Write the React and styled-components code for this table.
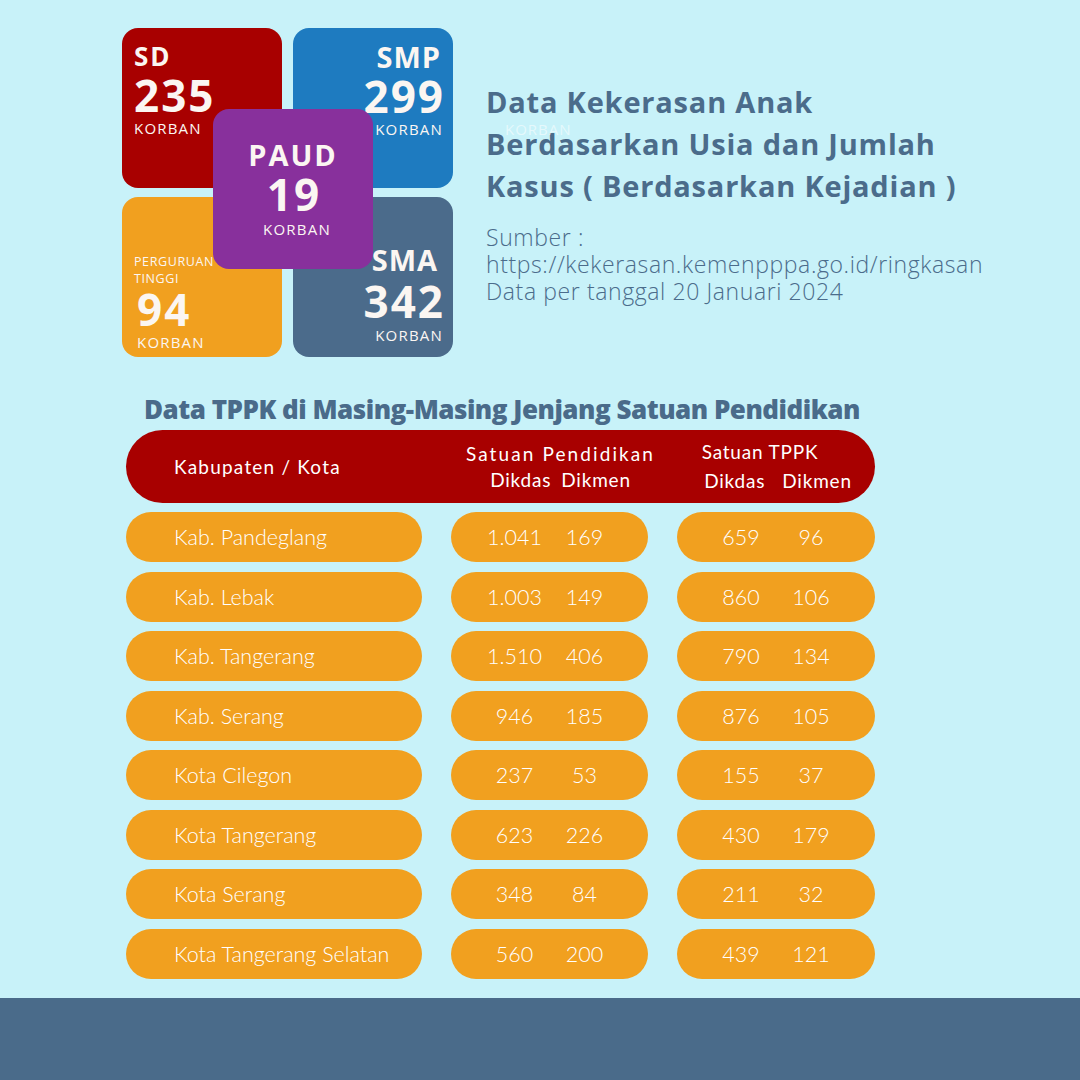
import React from "react";
import styled, { createGlobalStyle } from "styled-components";

const GlobalStyle = createGlobalStyle`
  html, body {
    margin: 0;
    padding: 0;
    background: #c8f2f9;
  }
  * {
    box-sizing: border-box;
  }
`;

const Page = styled.div`
  width: 1080px;
  height: 1080px;
  background: #c8f2f9;
  display: flex;
  flex-direction: column;
  padding-top: 28px;
  overflow: hidden;
`;

const Top = styled.section`
  display: flex;
  padding-left: 122px;
`;

const Cards = styled.div`
  position: relative;
  display: grid;
  grid-template-columns: 160px 160px;
  grid-template-rows: 160px 160px;
  column-gap: 11px;
  row-gap: 9px;
`;

const Card = styled.div`
  background: ${(p) => p.$bg};
  border-radius: 16px;
  display: flex;
  flex-direction: column;
  align-items: ${(p) => p.$align || "flex-start"};
  padding: ${(p) => p.$pad};
  color: #fbf6f2;
  font-family: "Open Sans", "Noto Sans", sans-serif;
`;

const CenterCard = styled(Card)`
  position: absolute;
  left: 91px;
  top: 81px;
  width: 160px;
  height: 160px;
`;

const Level = styled.div`
  font-size: ${(p) => p.$size || 29}px;
  font-weight: 700;
  line-height: 1;
  letter-spacing: ${(p) => p.$ls || 1}px;
  margin-right: ${(p) => p.$mr || 0}px;
`;

const Small = styled.div`
  font-size: 12.5px;
  line-height: 17px;
  letter-spacing: 0.6px;
`;

const Count = styled.div`
  font-size: 44px;
  font-weight: 700;
  line-height: 1;
  letter-spacing: 2px;
  margin-top: ${(p) => p.$mt ?? 4}px;
  margin-left: ${(p) => p.$ml || 0}px;
  margin-right: -2px;
`;

const Unit = styled.div`
  font-size: 15px;
  line-height: 1;
  letter-spacing: 1.2px;
  margin-top: ${(p) => p.$mt ?? 4}px;
  margin-left: ${(p) => p.$ml || 0}px;
`;

const Info = styled.div`
  position: relative;
  margin-left: 33px;
  padding-top: 53px;
  color: #4b6c8b;
  font-family: "Open Sans", "Noto Sans", sans-serif;
`;

const Title = styled.h1`
  margin: 0;
  font-size: 29px;
  font-weight: 700;
  line-height: 42px;
  letter-spacing: 0.8px;
`;

const Ghost = styled.span`
  position: absolute;
  left: 19px;
  top: 91px;
  font-size: 15px;
  letter-spacing: 1px;
  color: rgba(255, 255, 255, 0.55);
`;

const Source = styled.p`
  margin: 17px 0 0;
  font-size: 23px;
  font-weight: 300;
  line-height: 27px;
  letter-spacing: 0.6px;
`;

const TableSection = styled.section`
  margin-top: 37px;
  padding-left: 122px;
  display: flex;
  flex-direction: column;
`;

const TableTitle = styled.h2`
  margin: 0 0 6px 22px;
  font-family: "Open Sans", "Noto Sans", sans-serif;
  font-size: 26px;
  font-weight: 800;
  letter-spacing: -0.5px;
  line-height: 30px;
  color: #4a6b8a;
`;

const HeaderBar = styled.div`
  margin-left: 4px;
  width: 749px;
  height: 73px;
  border-radius: 37px;
  background: #a80000;
  display: grid;
  grid-template-columns: 296px 197px 198px;
  column-gap: 29px;
  align-items: center;
  color: #fff;
  font-family: Lato, "Noto Sans", sans-serif;
  font-size: 19px;
  letter-spacing: 0.8px;
  white-space: nowrap;
`;

const HeadLabel = styled.div`
  padding-left: 48px;
  letter-spacing: 1.2px;
`;

const HeadGroup = styled.div`
  display: flex;
  flex-direction: column;
  align-items: center;
  line-height: 26px;
  padding-left: ${(p) => p.$pl || 0}px;
  padding-right: ${(p) => p.$pr || 0}px;
`;

const GroupName = styled.span`
  letter-spacing: ${(p) => p.$ls || 0.8}px;
`;

const SubHeads = styled.div`
  display: flex;
  gap: ${(p) => p.$gap}px;
  margin-top: ${(p) => p.$mt || 0}px;
  margin-left: ${(p) => p.$ml || 0}px;
`;

const Rows = styled.div`
  display: flex;
  flex-direction: column;
  gap: 9.5px;
  margin-top: 9px;
`;

const Row = styled.div`
  display: flex;
  gap: 29px;
  margin-left: 4px;
`;

const Pill = styled.div`
  width: ${(p) => p.$w}px;
  height: 50px;
  border-radius: 25px;
  background: #f1a01f;
  color: #fff;
  font-family: Lato, "Noto Sans", sans-serif;
  font-size: 21.5px;
  font-weight: 300;
  display: flex;
  align-items: center;
`;

const NamePill = styled(Pill)`
  padding-left: 48px;
`;

const NumPill = styled(Pill)`
  justify-content: center;
`;

const Num = styled.span`
  width: 70px;
  text-align: center;
`;

const Bottom = styled.footer`
  margin-top: auto;
  height: 82px;
  background: #4a6b8a;
`;

const rows = [
  ["Kab. Pandeglang", "1.041", "169", "659", "96"],
  ["Kab. Lebak", "1.003", "149", "860", "106"],
  ["Kab. Tangerang", "1.510", "406", "790", "134"],
  ["Kab. Serang", "946", "185", "876", "105"],
  ["Kota Cilegon", "237", "53", "155", "37"],
  ["Kota Tangerang", "623", "226", "430", "179"],
  ["Kota Serang", "348", "84", "211", "32"],
  ["Kota Tangerang Selatan", "560", "200", "439", "121"],
];

const App = () => {
  return (
    <Page>
      <GlobalStyle />
      <Top>
        <Cards>
          <Card $bg="#a80000" $pad="15px 12px">
            <Level $size={26} $ls={2}>SD</Level>
            <Count>235</Count>
            <Unit>KORBAN</Unit>
          </Card>
          <Card $bg="#1e7bc0" $align="flex-end" $pad="14px 10px">
            <Level $mr={2}>SMP</Level>
            <Count $mt={3}>299</Count>
            <Unit>KORBAN</Unit>
          </Card>
          <Card $bg="#f1a01f" $pad="56px 12px">
            <Small>PERGURUAN</Small>
            <Small>TINGGI</Small>
            <Count $mt={0} $ml={3}>94</Count>
            <Unit $mt={4} $ml={3}>KORBAN</Unit>
          </Card>
          <Card $bg="#4b6b8b" $align="flex-end" $pad="48px 10px">
            <Level $mr={5}>SMA</Level>
            <Count $mt={5}>342</Count>
            <Unit $mt={5}>KORBAN</Unit>
          </Card>
          <CenterCard $bg="#88309c" $align="center" $pad="31px 0">
            <Level $ls={2}>PAUD</Level>
            <Count $mt={3}>19</Count>
            <Unit $mt={6} $ml={8}>KORBAN</Unit>
          </CenterCard>
        </Cards>
        <Info>
          <Title>
            Data Kekerasan Anak
            <br />
            Berdasarkan Usia dan Jumlah
            <br />
            Kasus ( Berdasarkan Kejadian )
          </Title>
          <Ghost>KORBAN</Ghost>
          <Source>
            Sumber :
            <br />
            https://kekerasan.kemenpppa.go.id/ringkasan
            <br />
            Data per tanggal 20 Januari 2024
          </Source>
        </Info>
      </Top>

      <TableSection>
        <TableTitle>Data TPPK di Masing-Masing Jenjang Satuan Pendidikan</TableTitle>
        <HeaderBar>
          <HeadLabel>Kabupaten / Kota</HeadLabel>
          <HeadGroup $pl={22}>
            <GroupName $ls={2.1}>Satuan Pendidikan</GroupName>
            <SubHeads $gap={10}>
              <span>Dikdas</span>
              <span>Dikmen</span>
            </SubHeads>
          </HeadGroup>
          <HeadGroup $pr={32}>
            <GroupName>Satuan TPPK</GroupName>
            <SubHeads $gap={17} $mt={3} $ml={36}>
              <span>Dikdas</span>
              <span>Dikmen</span>
            </SubHeads>
          </HeadGroup>
        </HeaderBar>
        <Rows>
          {rows.map(([name, a, b, c, d]) => (
            <Row key={name}>
              <NamePill $w={296}>{name}</NamePill>
              <NumPill $w={197}>
                <Num>{a}</Num>
                <Num>{b}</Num>
              </NumPill>
              <NumPill $w={198}>
                <Num>{c}</Num>
                <Num>{d}</Num>
              </NumPill>
            </Row>
          ))}
        </Rows>
      </TableSection>
      <Bottom />
    </Page>
  );
};

export default App;
